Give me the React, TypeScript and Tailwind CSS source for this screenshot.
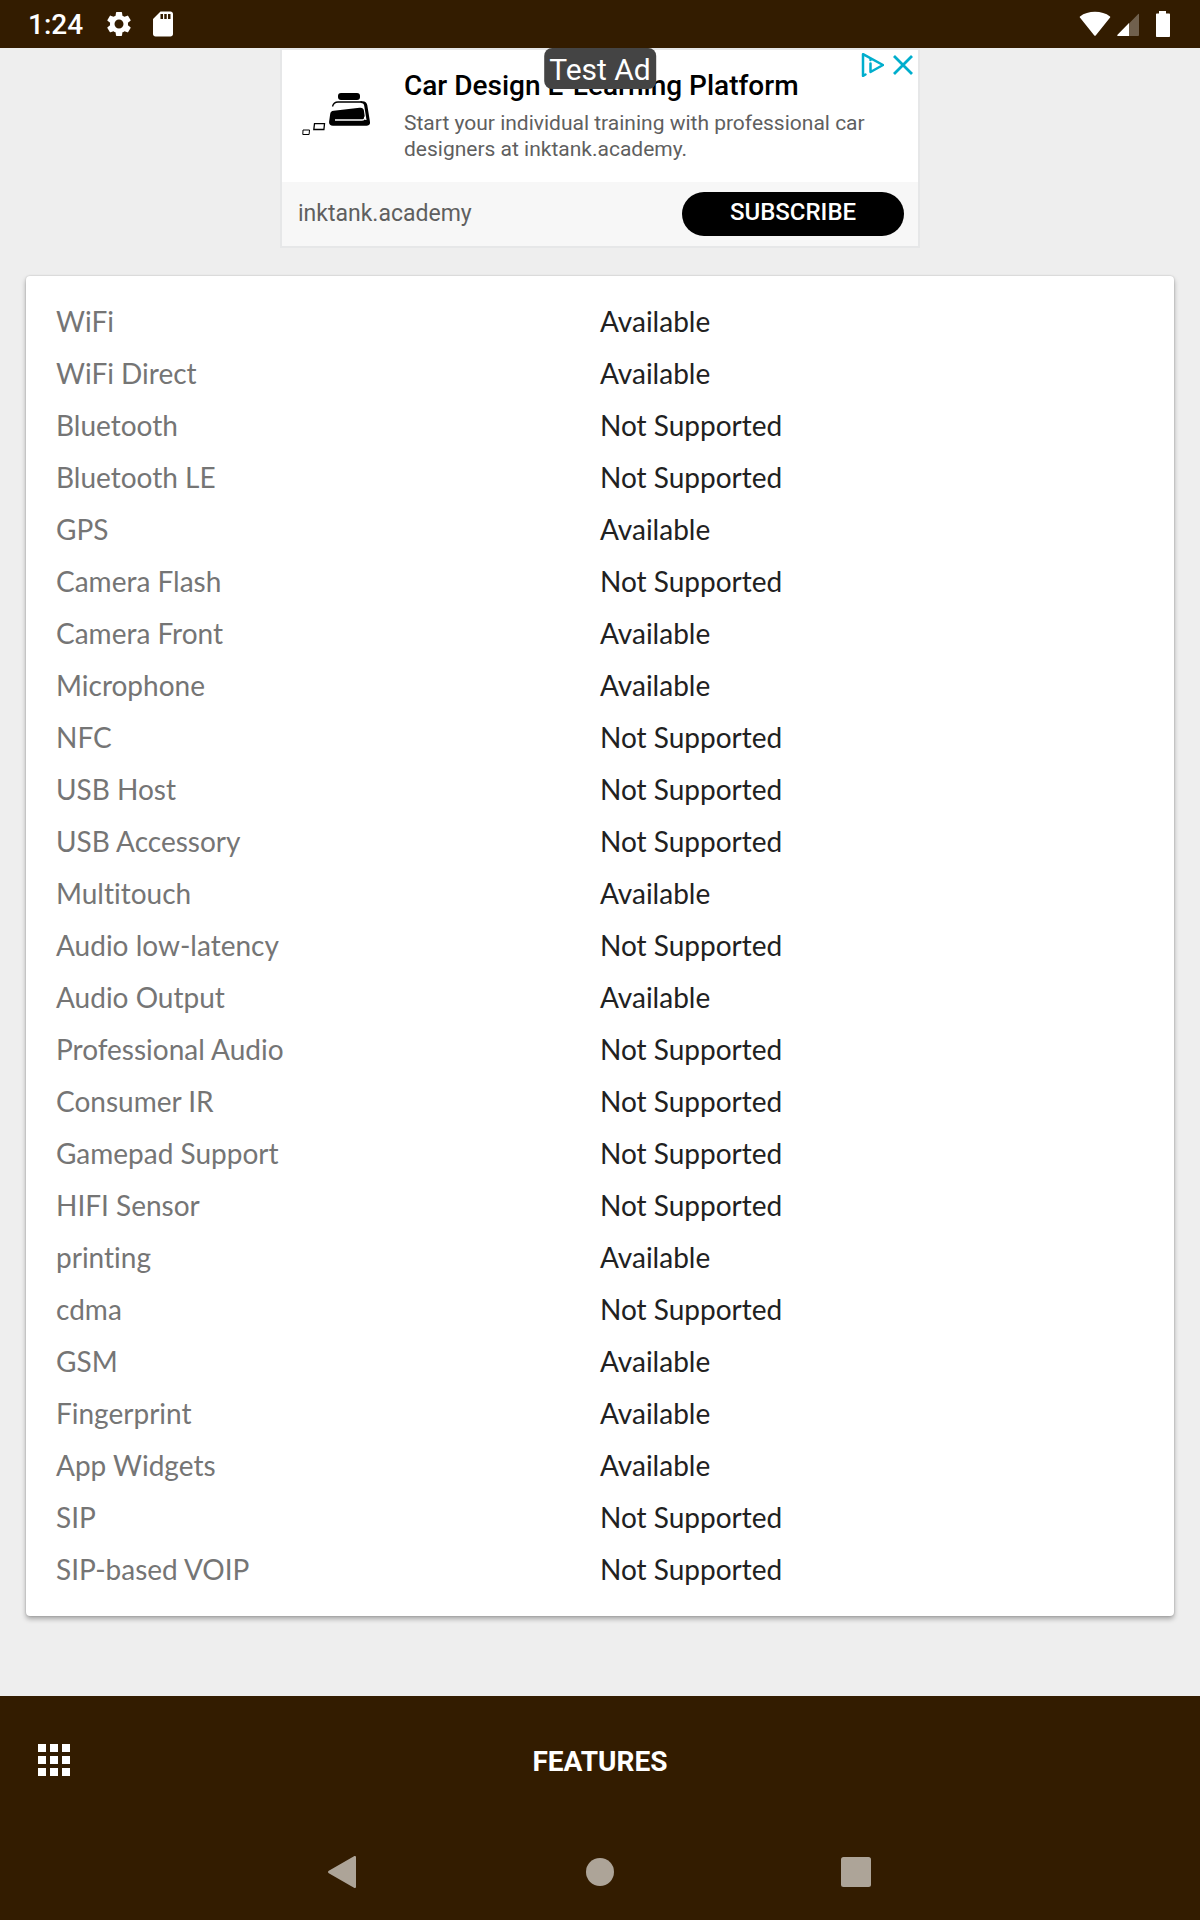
import { MdSdCard, MdSettings } from "react-icons/md";

interface Feature {
  name: string;
  available: boolean;
}

const FEATURES: Feature[] = [
  { name: "WiFi", available: true },
  { name: "WiFi Direct", available: true },
  { name: "Bluetooth", available: false },
  { name: "Bluetooth LE", available: false },
  { name: "GPS", available: true },
  { name: "Camera Flash", available: false },
  { name: "Camera Front", available: true },
  { name: "Microphone", available: true },
  { name: "NFC", available: false },
  { name: "USB Host", available: false },
  { name: "USB Accessory", available: false },
  { name: "Multitouch", available: true },
  { name: "Audio low-latency", available: false },
  { name: "Audio Output", available: true },
  { name: "Professional Audio", available: false },
  { name: "Consumer IR", available: false },
  { name: "Gamepad Support", available: false },
  { name: "HIFI Sensor", available: false },
  { name: "printing", available: true },
  { name: "cdma", available: false },
  { name: "GSM", available: true },
  { name: "Fingerprint", available: true },
  { name: "App Widgets", available: true },
  { name: "SIP", available: false },
  { name: "SIP-based VOIP", available: false },
];

function StatusBar() {
  return (
    <header className="flex h-12 items-center justify-between bg-[#331c00] pr-[30px] pl-7 text-white">
      <div className="flex items-center">
        <span className="pt-[2px] text-[28px] leading-8 font-medium">1:24</span>
        <MdSettings className="ml-[21px] size-[30px]" />
        <MdSdCard className="ml-[14px] size-[30px]" />
      </div>
      <div className="flex items-center">
        <svg className="h-[26px] w-8" viewBox="0 0 32 26" fill="currentColor">
          <path d="M1 5.500C5 2.300 10.300.8 16 .8s11 1.500 15 4.700c.4.300.4.700.1 1.100L16.700 24.400c-.4.500-1 .5-1.400 0L.9 6.600C.6 6.200.6 5.800 1 5.500z" />
        </svg>
        <svg className="ml-[6px] h-[26px] w-[23px]" viewBox="0 0 23 26" fill="currentColor">
          <path d="M22 2.800V24c0 .6-.3 1-.9 1H12V12.500L21 3.200c.4-.5 1-.7 1-.4z" opacity="0.300" />
          <path d="M12 12v13H1C.3 25 0 24.200.5 23.700z" />
        </svg>
        <svg className="ml-[15px] h-[26px] w-[15px]" viewBox="0 0 15 26" fill="currentColor">
          <path d="M4 0h7v2.500h3c.6 0 1 .4 1 1V25c0 .6-.4 1-1 1H2c-.6 0-1-.4-1-1V3.500c0-.6.4-1 1-1h2z" />
        </svg>
      </div>
    </header>
  );
}

function InkBottle() {
  return (
    <svg className="h-[44px] w-[68px]" viewBox="0 0 68 44">
      <rect x="36" y="1" width="22" height="7" rx="3" />
      <path d="M30.500 14.500c.8-3 2.500-4.500 5.500-4.500h24" fill="none" stroke="#000" strokeWidth="1.300" />
      <path d="M58 9.300h2.500c2.700 0 4.200 1.200 4.800 4L68 30c.3 2.500-1 3.800-3.500 3.800H31c-2.800 0-4.100-1.500-3.900-4l1-7.300c.3-2.500 1.400-3.400 3.700-3.700L57.500 15.700c2.600-.3 4 .5 4.400 2.800l1.300 9.500h1.300l-2.300-14.200c-.3-1.900-1.200-2.800-3.200-2.800z" />
      <path d="M33 28h26.500c2.600 0 3.500-1 3.100-3.400" fill="none" stroke="#fff" strokeWidth="1.300" />
      <path d="M12.500 31.700h10l-.6 5.800H11.800z" fill="none" stroke="#000" strokeWidth="1.300" />
      <path d="M1 38h6.500l-.4 4.500H.8z" fill="none" stroke="#000" strokeWidth="1" />
    </svg>
  );
}

function AdBanner() {
  return (
    <aside className="relative mx-auto h-[200px] w-full max-w-[640px] border-2 border-[#e6e7e8] bg-white">
      <div className="flex h-[132px]">
        <div className="w-[122px] shrink-0 pt-[42px] pl-5">
          <InkBottle />
        </div>
        <div className="pt-5">
          <h2 className="text-[28px] leading-8 font-medium text-black">Car Design E-Learning Platform</h2>
          <p className="mt-2 max-w-[480px] text-[21px] leading-[26px] text-[#5f5f5f]">
            Start your individual training with professional car designers at inktank.academy.
          </p>
        </div>
      </div>
      <div className="flex h-16 items-center justify-between bg-[#f7f7f7] pr-[14px] pl-4">
        <a href="#" className="text-[23px] leading-7 text-[#5f5f5f]">inktank.academy</a>
        <button className="h-11 w-[222px] rounded-full bg-black pb-1 text-[24px] leading-7 font-medium text-white">
          SUBSCRIBE
        </button>
      </div>
      <div className="absolute top-0 right-1 flex items-center gap-2 text-[#00aecd]">
        <button aria-label="AdChoices">
          <svg className="h-7 w-[26px]" viewBox="0 0 26 28" fill="none" stroke="currentColor" strokeWidth="2.500" strokeLinejoin="round" strokeLinecap="round">
            <path d="M7.500 24.500 5 25.800V4.200l20 10.800-12.500 7v-8.500" />
            <path d="M12.500 9.700v.2" />
          </svg>
        </button>
        <button aria-label="Close ad">
          <svg className="h-7 w-[22px]" viewBox="0 0 22 28" fill="none" stroke="currentColor" strokeWidth="2.800">
            <path d="m2 6 18 18M20 6 2 24" />
          </svg>
        </button>
      </div>
      <span className="absolute -top-[2px] left-1/2 flex h-[41px] -translate-x-1/2 items-center rounded-lg bg-[#444] px-[5px] pt-[2px] text-[30px] leading-8 whitespace-nowrap text-white">
        Test Ad
      </span>
    </aside>
  );
}

function FeatureTable({ data }: { data: Feature[] }) {
  return (
    <section className="mx-[26px] mt-7 mb-20 rounded-[4px] bg-white px-[30px] pt-[19px] pb-[21px] shadow-[0_3px_5px_rgba(0,0,0,0.3),0_0_2px_rgba(0,0,0,0.2)]">
      <table className="w-full table-fixed font-['Lato',sans-serif] text-[28px] leading-8 [font-variant-ligatures:none]">
        <tbody>
          {data.map((f) => (
            <tr key={f.name} className="h-[52px]">
              <th scope="row" className="p-0 text-left font-normal text-[#757575]">{f.name}</th>
              <td className="p-0 text-[#212121]">{f.available ? "Available" : "Not Supported"}</td>
            </tr>
          ))}
        </tbody>
      </table>
    </section>
  );
}

function BottomBar() {
  return (
    <footer className="bg-[#331c00] text-white">
      <div className="grid h-32 grid-cols-3 items-center px-[38px]">
        <button aria-label="Menu" className="justify-self-start">
          <svg className="size-8" viewBox="0 0 32 32" fill="currentColor">
            <path d="M0 0h8v8H0zM12 0h8v8h-8zM24 0h8v8h-8zM0 12h8v8H0zM12 12h8v8h-8zM24 12h8v8h-8zM0 24h8v8H0zM12 24h8v8h-8zM24 24h8v8h-8z" />
          </svg>
        </button>
        <h1 className="pt-1 text-center text-[28px] leading-8 font-bold">FEATURES</h1>
      </div>
      <nav className="flex h-24 items-center justify-center gap-56 text-[#ada498]">
        <button aria-label="Back">
          <svg className="size-8" viewBox="0 0 32 32" fill="currentColor">
            <path d="M.8 14.800 26 .3c1-.6 2-.1 2 1v29.400c0 1.100-1 1.600-2 1L.8 17.200c-1-.6-1-1.800 0-2.400z" />
          </svg>
        </button>
        <button aria-label="Home">
          <svg className="size-8" viewBox="0 0 32 32" fill="currentColor">
            <circle cx="16" cy="16" r="14" />
          </svg>
        </button>
        <button aria-label="Recent apps">
          <svg className="size-8" viewBox="0 0 32 32" fill="currentColor">
            <rect x="1" y="1" width="30" height="30" rx="2.500" />
          </svg>
        </button>
      </nav>
    </footer>
  );
}

export default function App() {
  return (
    <div className="flex min-h-screen flex-col bg-[#eeeeee] font-['Roboto',sans-serif]">
      <StatusBar />
      <main className="flex-1">
        <AdBanner />
        <FeatureTable data={FEATURES} />
      </main>
      <BottomBar />
    </div>
  );
}
